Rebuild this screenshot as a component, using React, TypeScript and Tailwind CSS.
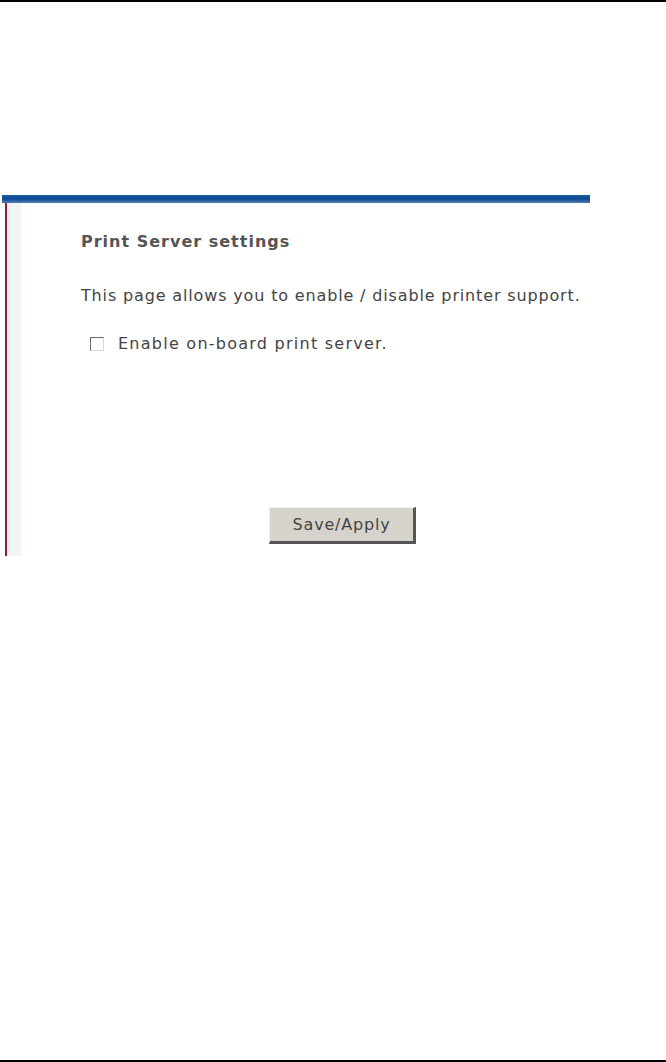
import React, { useState } from "react";

export default function App() {
  const [enabled, setEnabled] = useState(false);

  return (
    <div
      className="h-[1062px] w-full border-t-2 border-b-2 border-black bg-white flex flex-col"
      style={{ fontFamily: '"DejaVu Sans", Verdana, sans-serif' }}
    >
      {/* panel */}
      <div className="mt-[193px] ml-[2px] w-[588px] flex flex-col">
        <div className="h-[8px] bg-gradient-to-b from-[#1d5da3] via-[#0b4a8f] to-[#4f7fb8]" />
        <div className="flex h-[353px]">
          {/* left edge strip */}
          <div className="w-[19px] flex">
            <div className="w-[3px]" />
            <div className="w-[2px] bg-[#8c1f3c]" />
            <div className="flex-1 bg-gradient-to-r from-[#f8eaef] via-[#eef8f6] to-[#f2f4f4]" />
          </div>

          {/* content */}
          <div className="flex-1 pl-[60px] pt-[29px] text-[16px] tracking-[0.85px] text-[#444]">
            <h2 className="font-bold text-[#555] leading-[20px] tracking-[1px]">Print Server settings</h2>
            <p className="mt-[34px] leading-[20px]">
              This page allows you to enable / disable printer support.
            </p>
            <label className="mt-[28px] ml-[9px] flex items-center gap-[14px] leading-[20px] cursor-pointer">
              <span
                onClick={() => setEnabled(!enabled)}
                className="w-[14px] h-[14px] border border-t-[#6a6a6a] border-l-[#6a6a6a] border-r-[#d8d8d8] border-b-[#d8d8d8] bg-white flex items-center justify-center text-[10px] leading-none"
              >
                {enabled ? "✓" : ""}
              </span>
              <span className="tracking-[1.25px]">Enable on-board print server.</span>
            </label>

            <div className="mt-[153px] flex">
              <button className="ml-[188px] w-[147px] h-[37px] bg-[#d6d3cc] border-t border-l border-t-[#f2f2f2] border-l-[#f2f2f2] border-r-[3px] border-b-[3px] border-r-[#555] border-b-[#555] text-[16px] tracking-[0.8px] text-[#444]">
                Save/Apply
              </button>
            </div>
          </div>
        </div>
      </div>
    </div>
  );
}
